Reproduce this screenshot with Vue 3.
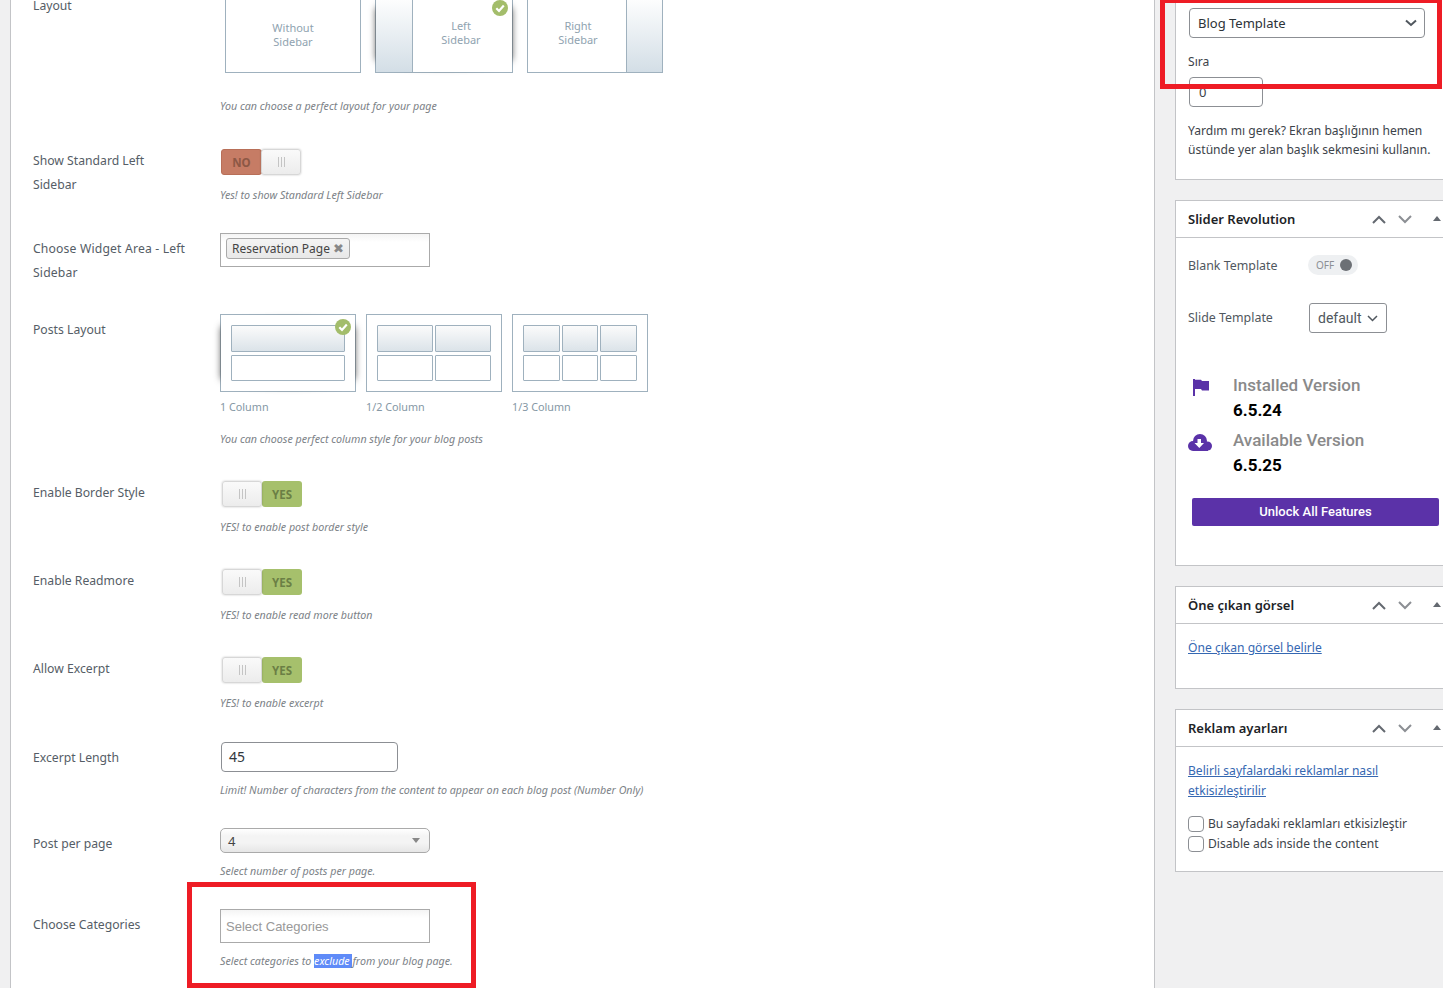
<script setup>
const layouts = [
  { cls: 'plain', text: ['Without', 'Sidebar'], on: false },
  { cls: 'left on', text: ['Left', 'Sidebar'], on: true },
  { cls: 'right', text: ['Right', 'Sidebar'], on: false },
]
const posts = [
  { label: '1 Column', cols: 1, on: true },
  { label: '1/2 Column', cols: 2, on: false },
  { label: '1/3 Column', cols: 3, on: false },
]
const toggles = [
  { label: 'Enable Border Style', help: 'YES! to enable post border style' },
  { label: 'Enable Readmore', help: 'YES! to enable read more button' },
  { label: 'Allow Excerpt', help: 'YES! to enable excerpt' },
]
</script>

<template>
  <div class="page">
    <main class="main">
      <section class="row r-layout">
        <div class="label">Layout</div>
        <div>
          <div class="tiles">
            <div v-for="l in layouts" :key="l.cls" class="tile" :class="l.cls">
              <span class="side"></span>
              <span class="tile-text">{{ l.text[0] }}<br />{{ l.text[1] }}</span>
              <span v-if="l.on" class="check"><svg viewBox="0 0 16 16" width="16" height="16"><path d="M4.3 8.3 7 11l4.8-5.4" fill="none" stroke="#fff" stroke-width="2.2" /></svg></span>
            </div>
          </div>
          <p class="help h-layout">You can choose a perfect layout for your page</p>
        </div>
      </section>

      <section class="row r-left">
        <div class="label wrap">Show Standard Left Sidebar</div>
        <div>
          <div class="switch no">
            <span class="sw-text">NO</span>
            <span class="knob"><i></i><i></i><i></i></span>
          </div>
          <p class="help h-switch">Yes! to show Standard Left Sidebar</p>
        </div>
      </section>

      <section class="row r-field">
        <div class="label wrap drop wide">Choose Widget Area - Left Sidebar</div>
        <div class="multi">
          <span class="token">Reservation Page <b>✖</b></span>
        </div>
      </section>

      <section class="row r-field">
        <div class="label drop">Posts Layout</div>
        <div>
          <div class="post-tiles">
            <div v-for="p in posts" :key="p.label" class="post-item">
              <div class="post-tile" :class="{ on: p.on }">
                <div class="cells" :class="'c' + p.cols">
                  <span v-for="n in p.cols" :key="'a' + n" class="cell shaded"></span>
                  <span v-for="n in p.cols" :key="'b' + n" class="cell"></span>
                </div>
                <span v-if="p.on" class="check"><svg viewBox="0 0 16 16" width="16" height="16"><path d="M4.3 8.3 7 11l4.8-5.4" fill="none" stroke="#fff" stroke-width="2.2" /></svg></span>
              </div>
              <div class="caption">{{ p.label }}</div>
            </div>
          </div>
          <p class="help h-posts">You can choose perfect column style for your blog posts</p>
        </div>
      </section>

      <section v-for="t in toggles" :key="t.label" class="row r-toggle">
        <div class="label">{{ t.label }}</div>
        <div>
          <div class="switch yes">
            <span class="knob"><i></i><i></i><i></i></span>
            <span class="sw-text">YES</span>
          </div>
          <p class="help h-switch">{{ t.help }}</p>
        </div>
      </section>

      <section class="row r-excerpt">
        <div class="label drop">Excerpt Length</div>
        <div>
          <div class="text-input">45</div>
          <p class="help h-tight">Limit! Number of characters from the content to appear on each blog post (Number Only)</p>
        </div>
      </section>

      <section class="row r-field">
        <div class="label drop">Post per page</div>
        <div>
          <div class="old-select">4<span class="tri"></span></div>
          <p class="help h-tight">Select number of posts per page.</p>
        </div>
      </section>

      <section class="row r-field">
        <div class="label drop">Choose Categories</div>
        <div>
          <div class="multi ph">Select Categories</div>
          <p class="help h-tight">Select categories to <span class="sel">exclude </span>from your blog page.</p>
        </div>
      </section>
    </main>

    <aside class="sidebar">
      <div class="panel first">
        <div class="wp-select">Blog Template
          <svg width="12" height="8" viewBox="0 0 12 8"><path d="M1 1.5 6 6l5-4.5" fill="none" stroke="#50575e" stroke-width="2" /></svg>
        </div>
        <div class="sira">Sıra</div>
        <div class="wp-input">0</div>
        <p class="need">Yardım mı gerek? Ekran başlığının hemen<br />üstünde yer alan başlık sekmesini kullanın.</p>
      </div>

      <div class="panel rev">
        <header class="head">
          <h3>Slider Revolution</h3>
          <span class="ctl">
            <svg width="14" height="9" viewBox="0 0 14 9"><path d="M1 8 7 2l6 6" fill="none" stroke="#646970" stroke-width="2" /></svg>
            <svg width="14" height="9" viewBox="0 0 14 9"><path d="M1 1l6 6 6-6" fill="none" stroke="#8c8f94" stroke-width="2" /></svg>
            <svg width="8" height="5" viewBox="0 0 8 5"><path d="M4 0l4 5H0z" fill="#646970" /></svg>
          </span>
        </header>
        <div class="rev-body">
          <div class="rev-line">
            <span class="rev-name">Blank Template</span>
            <span class="pill">OFF<i></i></span>
          </div>
          <div class="rev-line slide">
            <span class="rev-name">Slide Template</span>
            <span class="rev-select">default
              <svg width="11" height="7" viewBox="0 0 11 7"><path d="M1 1l4.500 4.500L10 1" fill="none" stroke="#50575e" stroke-width="1.500" /></svg>
            </span>
          </div>
          <div class="ver first-ver">
            <span class="ver-ic flag"><svg width="16" height="17" viewBox="0 0 16 17"><path d="M0 0h2v17H0zM2 .7h6L9 2h7v9.500H9L8 10H2z" fill="#5a32a8" /></svg></span>
            <div>
              <div class="ver-name">Installed Version</div>
              <div class="ver-num">6.5.24</div>
            </div>
          </div>
          <div class="ver second-ver">
            <span class="ver-ic cloud"><svg width="24" height="17" viewBox="0 0 24 17"><g fill="#5a32a8"><circle cx="5" cy="12" r="5" /><circle cx="12" cy="7" r="7" /><circle cx="19.500" cy="12" r="4.500" /><rect x="5" y="10" width="15" height="7" /></g><path d="M9.500 5h3.500v4h3l-4.700 5-4.800-5h3z" fill="#fff" /></svg></span>
            <div>
              <div class="ver-name">Available Version</div>
              <div class="ver-num">6.5.25</div>
            </div>
          </div>
          <div class="unlock">Unlock All Features</div>
        </div>
      </div>

      <div class="panel thumb">
        <header class="head">
          <h3>Öne çıkan görsel</h3>
          <span class="ctl">
            <svg width="14" height="9" viewBox="0 0 14 9"><path d="M1 8 7 2l6 6" fill="none" stroke="#646970" stroke-width="2" /></svg>
            <svg width="14" height="9" viewBox="0 0 14 9"><path d="M1 1l6 6 6-6" fill="none" stroke="#8c8f94" stroke-width="2" /></svg>
            <svg width="8" height="5" viewBox="0 0 8 5"><path d="M4 0l4 5H0z" fill="#646970" /></svg>
          </span>
        </header>
        <div class="thumb-body"><a class="link">Öne çıkan görsel belirle</a></div>
      </div>

      <div class="panel ads">
        <header class="head">
          <h3>Reklam ayarları</h3>
          <span class="ctl">
            <svg width="14" height="9" viewBox="0 0 14 9"><path d="M1 8 7 2l6 6" fill="none" stroke="#646970" stroke-width="2" /></svg>
            <svg width="14" height="9" viewBox="0 0 14 9"><path d="M1 1l6 6 6-6" fill="none" stroke="#8c8f94" stroke-width="2" /></svg>
            <svg width="8" height="5" viewBox="0 0 8 5"><path d="M4 0l4 5H0z" fill="#646970" /></svg>
          </span>
        </header>
        <div class="ads-body">
          <a class="link">Belirli sayfalardaki reklamlar nasıl<br />etkisizleştirilir</a>
          <div class="chk first-chk"><i></i>Bu sayfadaki reklamları etkisizleştir</div>
          <div class="chk"><i></i>Disable ads inside the content</div>
        </div>
      </div>
    </aside>

    <div class="mark mark-top"></div>
    <div class="mark mark-bottom"></div>
  </div>
</template>

<style>
html, body { margin: 0; background: #f0f0f1; }
</style>

<style scoped>
.page {
  position: relative;
  display: flex;
  align-items: flex-start;
  height: 988px;
  overflow: hidden;
  background: #f0f0f1;
  font-family: "Noto Sans", "Open Sans", sans-serif;
  color: #50575e;
}
p { margin: 0; }
.main {
  flex: none;
  box-sizing: border-box;
  width: 1145px;
  height: 1010px;
  margin: -7px 0 0 10px;
  padding-left: 22px;
  background: #fff;
  border-left: 1px solid #c3c4c7;
  border-right: 1px solid #c3c4c7;
}
.row { display: grid; grid-template-columns: 187px 1fr; }
.label {
  width: 155px;
  padding-top: 1px;
  margin-bottom: -1px;
  font-size: 12.2px;
  line-height: 24px;
  color: #555d66;
}
.label.drop { padding-top: 4px; }
.label.wide { letter-spacing: .16px; }
.r-layout { margin-top: 0; }
.r-left { margin-top: 34px; }
.r-field { margin-top: 30px; }
.r-toggle { margin-top: 33px; }
.r-excerpt { margin-top: 31px; }
.help {
  font-size: 10.7px;
  line-height: 16px;
  font-style: italic;
  color: #7c8287;
  white-space: nowrap;
}
.h-layout { margin-top: 25px; }
.h-switch { margin-top: 12px; }
.h-posts { margin-top: 16px; }
.h-tight { margin-top: 10px; }

.tiles { display: flex; gap: 14px; margin: 2px 0 0 5px; }
.tile {
  position: relative;
  z-index: 0;
  box-sizing: border-box;
  display: flex;
  justify-content: center;
  align-items: center;
  width: 136px;
  height: 78px;
  border: 1px solid #9fb1be;
  background: #fff;
}
.tile.left { width: 138px; }
.side { display: none; }
.left .side, .right .side {
  display: block;
  position: absolute;
  top: 0;
  bottom: 0;
  background: linear-gradient(#fff, #d3dee6);
}
.left .side { left: 0; width: 36px; border-right: 1px solid #9fb1be; }
.right .side { right: 0; width: 35px; border-left: 1px solid #9fb1be; }
.tile-text {
  font-size: 11px;
  line-height: 14px;
  text-align: center;
  color: #8fa3b0;
}
.plain .tile-text { margin-top: 2px; }
.left .tile-text { margin: -2px 0 0 34px; }
.right .tile-text { margin: -2px 34px 0 0; }
.tile.on::before, .post-tile.on::before {
  content: "";
  position: absolute;
  z-index: -2;
  top: 8%;
  bottom: 8%;
  left: 1px;
  right: 1px;
  border-radius: 50% / 12%;
  box-shadow: 0 0 7px 1px #555;
}
.tile.on::after, .post-tile.on::after {
  content: "";
  position: absolute;
  z-index: -1;
  inset: 0;
  background: #fff;
}
.check {
  position: absolute;
  z-index: 2;
  top: 4px;
  right: 4px;
  width: 16px;
  height: 16px;
  border-radius: 50%;
  background: #a3bd6b;
}
.check svg { display: block; }

.switch {
  display: flex;
  box-sizing: border-box;
  width: 80px;
  height: 26px;
  margin-top: 1px;
  font-size: 11.5px;
  font-weight: 700;
  text-align: center;
  border-radius: 3px;
}
.no { margin-left: 1px; }
.yes { margin-left: 2px; }
.sw-text { width: 41px; border-radius: 3px; box-sizing: border-box; }
.no .sw-text { background: #c67c65; color: #8d5845; border: 1px solid #b86f58; line-height: 25px; }
.yes .sw-text { background: #a6c06c; color: #6b7f45; line-height: 27px; width: 40px; }
.knob {
  display: flex;
  justify-content: center;
  align-items: center;
  gap: 2px;
  width: 40px;
  box-sizing: border-box;
  position: relative;
  border: 1px solid #d7d7d7;
  border-radius: 3px;
  background: linear-gradient(#fafafa, #ececec);
  box-shadow: 0 0 2px rgba(0, 0, 0, .25);
}
.no .knob { margin-left: -1px; }
.knob i { width: 1px; height: 10px; background: #c4c4c4; }

.multi {
  display: flex;
  align-items: flex-start;
  box-sizing: border-box;
  width: 210px;
  height: 34px;
  padding: 4px 5px;
  border: 1px solid #aaa;
  background: linear-gradient(#f4f4f4, #fff 25%);
}
.token {
  display: block;
  box-sizing: border-box;
  height: 21px;
  padding: 0 5px;
  font-size: 12px;
  line-height: 19px;
  color: #444;
  border: 1px solid #aaa;
  border-radius: 3px;
  background: linear-gradient(#f4f4f4, #e8e8e8);
  white-space: nowrap;
}
.token b { font-size: 13px; color: #888; font-weight: 400; }
.ph {
  font-family: "Liberation Sans", Arial, sans-serif;
  font-size: 13px;
  line-height: 26px;
  color: #999;
}

.post-tiles { display: flex; gap: 10px; }
.post-tile {
  position: relative;
  z-index: 0;
  box-sizing: border-box;
  width: 136px;
  height: 78px;
  padding: 10px;
  border: 1px solid #9fb1be;
  background: #fff;
}
.cells { display: grid; gap: 3px 2px; grid-template-rows: 27px 26px; }
.cells.c1 { grid-template-columns: 1fr; }
.cells.c2 { grid-template-columns: 1fr 1fr; }
.cells.c3 { grid-template-columns: 1fr 1fr 1fr; }
.cell { box-sizing: border-box; border: 1px solid #9fb1be; border-radius: 1px; background: #fff; }
.cell.shaded { background: linear-gradient(#fbfbfb, #dbe3e9); }
.caption { margin-top: 7px; font-size: 10.8px; line-height: 16px; color: #8598a5; }

.text-input {
  box-sizing: border-box;
  width: 177px;
  height: 30px;
  margin-left: 1px;
  padding-left: 7px;
  font-size: 14px;
  line-height: 28px;
  color: #32373c;
  border: 1px solid #8c8f94;
  border-radius: 4px;
}
.old-select {
  position: relative;
  box-sizing: border-box;
  width: 210px;
  height: 25px;
  padding-left: 7px;
  font-size: 13px;
  line-height: 25px;
  color: #444;
  border: 1px solid #aaa;
  border-radius: 5px;
  background: linear-gradient(#fff, #f4f4f4 30%, #f4f4f4 60%, #e6e6e6);
}
.tri {
  position: absolute;
  right: 9px;
  top: 9px;
  border: 4px solid transparent;
  border-top: 5px solid #888;
  border-bottom: 0;
}
.sel { background: #5f8bf8; color: #fff; }

.sidebar { flex: none; width: 280px; margin-left: 20px; }
.panel {
  box-sizing: border-box;
  background: #fff;
  border: 1px solid #c3c4c7;
  font-size: 12.1px;
  color: #3c434a;
}
.first {
  height: 181px;
  margin-top: -1px;
  padding: 8px 0 0 12px;
}
.wp-select {
  display: flex;
  justify-content: space-between;
  align-items: center;
  box-sizing: border-box;
  width: 236px;
  height: 30px;
  margin-left: 1px;
  padding: 0 7px 0 8px;
  font-size: 13px;
  color: #2c3338;
  border: 1px solid #8c8f94;
  border-radius: 4px;
}
.sira { margin-top: 14px; line-height: 19px; }
.wp-input {
  box-sizing: border-box;
  width: 74px;
  height: 30px;
  margin: 6px 0 0 1px;
  padding-left: 9px;
  font-size: 13px;
  line-height: 28px;
  border: 1px solid #8c8f94;
  border-radius: 4px;
}
.need { margin-top: 14px; line-height: 19px; white-space: nowrap; }
.rev { height: 366px; margin-top: 20px; }
.thumb { height: 103px; margin-top: 20px; }
.ads { height: 163px; margin-top: 20px; }
.head {
  position: relative;
  box-sizing: border-box;
  height: 37px;
  padding-left: 12px;
  border-bottom: 1px solid #c3c4c7;
}
.head h3 {
  margin: 0;
  font-size: 13px;
  font-weight: 600;
  line-height: 36px;
  color: #1d2327;
}
.ctl svg { position: absolute; }
.ctl svg:nth-child(1) { left: 196px; top: 14px; }
.ctl svg:nth-child(2) { left: 222px; top: 14px; }
.ctl svg:nth-child(3) { left: 257px; top: 15px; }
.rev-body { padding: 17px 3px 0 12px; font-family: Roboto, sans-serif; }
.rev-line { display: flex; align-items: center; height: 20px; }
.rev-name { width: 120px; font-family: "Noto Sans", sans-serif; font-size: 12.4px; color: #50575e; }
.slide .rev-name { margin-bottom: 2px; }
.pill {
  display: flex;
  align-items: center;
  box-sizing: border-box;
  width: 50px;
  height: 20px;
  padding: 0 6px 0 8px;
  justify-content: space-between;
  font-family: "Noto Sans", sans-serif;
  font-size: 10px;
  color: #8c8f94;
  background: #eef0f2;
  border-radius: 10px;
}
.pill i { width: 12px; height: 12px; border-radius: 50%; background: #6c7075; }
.slide { height: 30px; margin-top: 28px; }
.rev-name + .rev-select { margin-left: 1px; }
.rev-select {
  display: flex;
  align-items: center;
  justify-content: space-between;
  box-sizing: border-box;
  width: 78px;
  height: 30px;
  padding: 0 8px;
  font-size: 14px;
  color: #50575e;
  border: 1px solid #8c8f94;
  border-radius: 3px;
}
.ver { display: flex; }
.first-ver { margin-top: 40px; }
.second-ver { margin-top: 5px; }
.ver-ic { width: 45px; flex: none; }
.ver-ic svg { display: block; }
.flag { padding: 6px 0 0 5px; width: 40px; }
.cloud { padding-top: 6px; }
.ver-name { font-size: 17px; font-weight: 500; line-height: 25px; color: #8a8a8a; }
.ver-num { font-size: 17px; font-weight: 700; line-height: 25px; color: #000; }
.unlock {
  width: 247px;
  height: 28px;
  margin: 20px 0 0 4px;
  font-size: 13px;
  font-weight: 500;
  line-height: 28px;
  text-align: center;
  color: #fff;
  background: #5b32a8;
  border-radius: 2px;
}
.thumb-body { padding: 14px 0 0 12px; line-height: 19px; }
.link { color: #3568b2; text-decoration: underline; line-height: 20px; }
.ads-body { padding: 14px 0 0 12px; line-height: 20px; }
.chk { display: flex; align-items: center; height: 20px; white-space: nowrap; }
.first-chk { margin-top: 13px; }
.chk i {
  box-sizing: border-box;
  width: 16px;
  height: 16px;
  margin-right: 4px;
  border: 1px solid #8c8f94;
  border-radius: 4px;
  background: #fff;
}

.mark { position: absolute; box-sizing: border-box; border: 5px solid #ee1c25; }
.mark-top { left: 1160px; top: -2px; width: 282px; height: 91px; }
.mark-bottom { left: 187px; top: 882px; width: 289px; height: 106px; }
</style>
